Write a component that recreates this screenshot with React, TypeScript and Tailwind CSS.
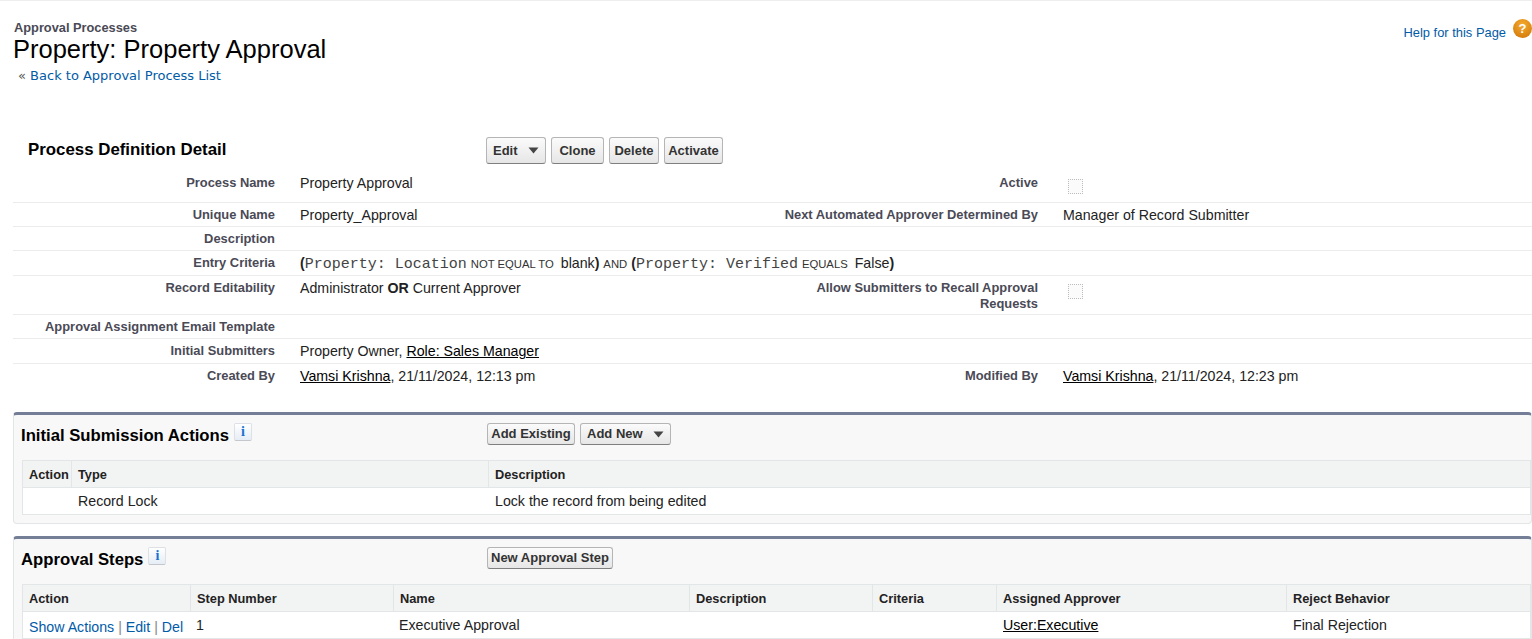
const FONT = "font-['Liberation_Sans',Arial,sans-serif]";

function Caret() {
	return (
		<svg width="11" height="7" viewBox="0 0 11 7" className="inline-block">
			<path d="M0.5 0.5H10.5L5.5 6.5Z" fill="#444" />
		</svg>
	);
}

function Btn({ label, caret, className }: { label: string; caret?: boolean; className: string }) {
	return (
		<button
			className={`flex items-center justify-between rounded-[3px] border border-[#b5b5b5] border-b-[#7f7f7f] bg-gradient-to-b from-[#fbfbfb] to-[#e6e6e6] text-[13px] font-bold text-[#333] ${className}`}
		>
			<span>{label}</span>
			{caret && <Caret />}
		</button>
	);
}

function InfoIcon() {
	return (
		<span className="flex h-[18px] w-[18px] items-center justify-center rounded-[2px] border border-[#dde1e6] border-b-[#c4c8cc] bg-gradient-to-b from-[#ffffff] to-[#e6edf5] font-['Liberation_Serif',serif] text-[14px] font-bold leading-none text-[#1a73d0]">
			i
		</span>
	);
}

function Check() {
	return <span className="block h-[15px] w-[15px] border border-dotted border-[#bdbdbd] bg-[#fbfbfb]" />;
}

const U = ({ children }: { children: string }) => <span className="text-black underline">{children}</span>;
const M = ({ children }: { children: string }) => (
	<span className="font-['Liberation_Mono',monospace] text-[15px] text-[#444]">{children}</span>
);
const Op = ({ children }: { children: string }) => <span className="text-[11.3px] text-[#333]">{children}</span>;

type Row = {
	h: string;
	l1: string;
	v1?: React.ReactNode;
	l2?: React.ReactNode;
	v2?: React.ReactNode;
	border?: boolean;
};

const rows: Row[] = [
	{ h: "h-[39px] pt-[11px]", l1: "Process Name", v1: "Property Approval", l2: "Active", v2: <div className="ml-[5px] mt-[4px]"><Check /></div>, border: true },
	{ h: "h-[24px] pt-[4px]", l1: "Unique Name", v1: "Property_Approval", l2: "Next Automated Approver Determined By", v2: "Manager of Record Submitter", border: true },
	{ h: "h-[24px] pt-[4px]", l1: "Description", border: true },
	{
		h: "h-[25px] pt-[4px]",
		l1: "Entry Criteria",
		v1: (
			<span className="whitespace-nowrap">
				<b>(</b><M>Property: Location</M> <Op>NOT EQUAL TO</Op> <span className="ml-[3px]">blank</span><b>)</b> <Op>AND</Op> <b>(</b><M>Property: Verified</M> <Op>EQUALS</Op> <span className="ml-[3px]">False</span><b>)</b>
			</span>
		),
		border: true,
	},
	{
		h: "h-[39px] pt-[4px]",
		l1: "Record Editability",
		v1: <>Administrator <b>OR</b> Current Approver</>,
		l2: <>Allow Submitters to Recall Approval<br />Requests</>,
		v2: <div className="ml-[5px] mt-[4px]"><Check /></div>,
		border: true,
	},
	{ h: "h-[24px] pt-[4px]", l1: "Approval Assignment Email Template", border: true },
	{ h: "h-[25px] pt-[4px]", l1: "Initial Submitters", v1: <>Property Owner, <U>Role: Sales Manager</U></>, border: true },
	{
		h: "h-[25px] pt-[4px]",
		l1: "Created By",
		v1: <><U>Vamsi Krishna</U>, 21/11/2024, 12:13 pm</>,
		l2: "Modified By",
		v2: <><U>Vamsi Krishna</U>, 21/11/2024, 12:23 pm</>,
	},
];

type Col = { w: string; t: string; p?: string };

function Section({
	title,
	buttons,
	head,
	cells,
}: {
	title: string;
	buttons: React.ReactNode;
	head: Col[];
	cells: React.ReactNode[];
}) {
	return (
		<section className="rounded-[4px] border border-t-[3px] border-[#e3e6e6] border-t-[#747e96] bg-[#f8f8f8] pb-[8px] pl-[8px] pr-0">
			<div className="flex h-[45px]">
				<div className="-ml-[1px] flex w-[466px] shrink-0 pt-[8px]">
					<h2 className="pr-[5px] pt-[3px] text-[16.7px] font-bold leading-[20px] text-black">{title}</h2>
					<InfoIcon />
				</div>
				<div className="mt-[8px] flex h-[22px] gap-[5px]">{buttons}</div>
			</div>
			<div className="border border-[#e3e6e6] bg-white">
				<div className="flex h-[27px] border-b border-[#e3e6e6] bg-[#f2f3f3] text-[12.8px] font-bold text-[#222]">
					{head.map((c, i) => (
						<div
							key={c.t + i}
							className={`flex h-full shrink-0 items-center px-[6px] pt-[1px] ${i === 0 ? "" : "border-l border-[#e3e6e6]"} ${c.w}`}
						>
							{c.t}
						</div>
					))}
				</div>
				<div className="flex h-[26px] text-[14.2px] text-[#222]">
					{head.map((c, i) => (
						<div key={c.t} className={`flex h-full shrink-0 items-center px-[6px] pt-[2px] ${c.p ?? ""} ${c.w}`}>
							{cells[i]}
						</div>
					))}
				</div>
			</div>
		</section>
	);
}

export default function App() {
	return (
		<div className={`h-[639px] w-[1532px] overflow-hidden border-t border-[#eeeeee] bg-white ${FONT}`}>
			<header className="relative h-[122px] pl-[14px]">
				<p className="pt-[19px] text-[12.8px] font-bold leading-[15px] text-[#4a4a56]">Approval Processes</p>
				<h1 className="-ml-[1px] -mt-[1px] text-[25.5px] leading-[30px] text-black">Property: Property Approval</h1>
				<p className="pl-[4px] pt-[3px] font-['DejaVu_Sans',sans-serif] text-[13px] leading-[18px] text-[#555]">
					« <a className="text-[#015ba7]">Back to Approval Process List</a>
				</p>
				<div className="absolute right-0 top-[18px] flex items-start gap-[7px] text-[12.9px] text-[#015ba7]">
					<span className="mt-[4px] leading-[19px]">Help for this Page</span>
					<span className="flex h-[19px] w-[19px] items-center justify-center rounded-full bg-[radial-gradient(circle_at_50%_30%,#f4ab2e,#cf7206)] text-[13px] font-bold text-white">
						?
					</span>
				</div>
			</header>

			<main className="pl-[13px]">
				<div className="flex h-[41px] items-start pt-[14px]">
					<h2 className="w-[473px] shrink-0 pl-[15px] pt-[3px] text-[16.85px] font-bold leading-[19px] text-black">
						Process Definition Detail
					</h2>
					<div className="flex h-[27px] gap-[5px]">
						<Btn label="Edit" caret className="w-[60px] pl-[6px] pr-[6px]" />
						<Btn label="Clone" className="w-[53px] justify-center" />
						<Btn label="Delete" className="w-[50px] justify-center" />
						<Btn label="Activate" className="w-[59px] justify-center" />
					</div>
				</div>

				{rows.map((r) => (
					<div
						key={r.l1}
						className={`flex text-[14.2px] leading-[16px] text-[#222] ${r.h} ${r.border ? "border-b border-[#ececec]" : ""}`}
					>
						<div className="w-[262px] shrink-0 text-right text-[12.9px] font-bold text-[#4a4a56]">{r.l1}</div>
						<div className="w-[462px] shrink-0 pl-[25px]">{r.v1}</div>
						<div className="w-[301px] shrink-0 text-right text-[12.9px] font-bold text-[#4a4a56]">{r.l2}</div>
						<div className="pl-[25px]">{r.v2}</div>
					</div>
				))}

				<div className="mt-[23px] flex flex-col gap-[12px]">
					<Section
						title="Initial Submission Actions"
						buttons={
							<>
								<Btn label="Add Existing" className="w-[88px] justify-center" />
								<Btn label="Add New" caret className="w-[91px] pl-[6px] pr-[6px]" />
							</>
						}
						head={[
							{ w: "w-[48px]", t: "Action" },
							{ w: "w-[417px]", t: "Type", p: "pl-[7px]" },
							{ w: "w-[1043px]", t: "Description", p: "pl-[7px]" },
						]}
						cells={[null, "Record Lock", "Lock the record from being edited"]}
					/>
					<Section
						title="Approval Steps"
						buttons={<Btn label="New Approval Step" className="w-[126px] justify-center" />}
						head={[
							{ w: "w-[167px]", t: "Action" },
							{ w: "w-[203px]", t: "Step Number" },
							{ w: "w-[296px]", t: "Name" },
							{ w: "w-[183px]", t: "Description" },
							{ w: "w-[124px]", t: "Criteria" },
							{ w: "w-[290px]", t: "Assigned Approver", p: "pl-[7px]" },
							{ w: "w-[245px]", t: "Reject Behavior", p: "pl-[7px]" },
						]}
						cells={[
							<span className="mt-[3px] whitespace-nowrap text-[#015ba7]">
								Show Actions <span className="text-[#888]">|</span> Edit <span className="text-[#888]">|</span> Del
							</span>,
							"1",
							"Executive Approval",
							null,
							null,
							<U>User:Executive</U>,
							"Final Rejection",
						]}
					/>
				</div>
			</main>
		</div>
	);
}
